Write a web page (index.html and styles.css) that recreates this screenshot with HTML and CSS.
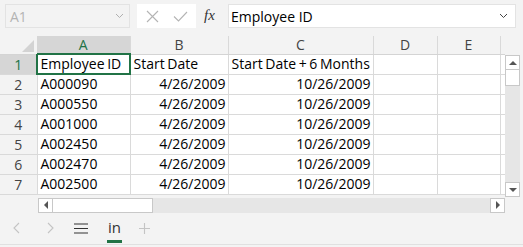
FILE: index.html
```html
<!DOCTYPE html>
<html lang="en">
<head>
    <meta charset="UTF-8">
    <title>Start Date + 6 Months</title>
    <link rel="stylesheet" href="styles.css">
</head>
<body>
    <div class="formula-bar">
        <div class="name-box">
            <span>A1</span>
            <svg class="chev" width="9" height="6" viewBox="0 0 9 6"><path d="M1 1l3.5 3.5L8 1" fill="none" stroke="#b0b0b0" stroke-width="1"/></svg>
        </div>
        <div class="fx-buttons">
            <svg class="btn-icon" width="13" height="13" viewBox="0 0 13 13"><path d="M1 1l11 11M12 1L1 12" stroke="#b4b4b4" stroke-width="1.1" fill="none"/></svg>
            <svg class="btn-icon" width="15" height="11" viewBox="0 0 15 11"><path d="M1 5.5l4.5 4.5L14 1" stroke="#b4b4b4" stroke-width="1.1" fill="none"/></svg>
        </div>
        <div class="fx">fx</div>
        <div class="formula-input">
            <span>Employee ID</span>
            <svg class="chev" width="9" height="6" viewBox="0 0 9 6"><path d="M1 1l3.5 3.5L8 1" fill="none" stroke="#444" stroke-width="1"/></svg>
        </div>
    </div>

    <div class="sheet">
        <div class="grid-wrap">
            <table class="grid">
                <colgroup>
                    <col class="c-rh"><col class="c-a"><col class="c-b"><col class="c-c"><col class="c-d"><col class="c-e"><col class="c-f">
                </colgroup>
                <thead>
                    <tr>
                        <th class="corner"><span class="tri"></span></th>
                        <th class="sel">A</th>
                        <th>B</th>
                        <th>C</th>
                        <th>D</th>
                        <th>E</th>
                        <th class="edge"></th>
                    </tr>
                </thead>
                <tbody>
                    <tr><th class="sel">1</th><td class="active">Employee ID</td><td>Start Date</td><td>Start Date + 6 Months</td><td></td><td></td><td class="edge"></td></tr>
                    <tr><th>2</th><td>A000090</td><td class="num">4/26/2009</td><td class="num">10/26/2009</td><td></td><td></td><td class="edge"></td></tr>
                    <tr><th>3</th><td>A000550</td><td class="num">4/26/2009</td><td class="num">10/26/2009</td><td></td><td></td><td class="edge"></td></tr>
                    <tr><th>4</th><td>A001000</td><td class="num">4/26/2009</td><td class="num">10/26/2009</td><td></td><td></td><td class="edge"></td></tr>
                    <tr><th>5</th><td>A002450</td><td class="num">4/26/2009</td><td class="num">10/26/2009</td><td></td><td></td><td class="edge"></td></tr>
                    <tr><th>6</th><td>A002470</td><td class="num">4/26/2009</td><td class="num">10/26/2009</td><td></td><td></td><td class="edge"></td></tr>
                    <tr><th>7</th><td>A002500</td><td class="num">4/26/2009</td><td class="num">10/26/2009</td><td></td><td></td><td class="edge"></td></tr>
                </tbody>
            </table>
            <div class="hscroll">
                <div class="sb-btn"><span class="arr arr-left"></span></div>
                <div class="h-thumb"></div>
                <div class="h-track"></div>
                <div class="sb-btn"><span class="arr arr-right"></span></div>
            </div>
        </div>
        <div class="vscroll">
            <div class="sb-btn"><span class="arr arr-up"></span></div>
            <div class="v-thumb"></div>
            <div class="v-track"></div>
            <div class="sb-btn"><span class="arr arr-down"></span></div>
        </div>
    </div>

    <div class="tabs">
        <svg class="nav" width="7" height="12" viewBox="0 0 7 12"><path d="M6 1L1 6l5 5" fill="none" stroke="#c4c4c4" stroke-width="1.1"/></svg>
        <svg class="nav" width="7" height="12" viewBox="0 0 7 12"><path d="M1 1l5 5-5 5" fill="none" stroke="#c4c4c4" stroke-width="1.1"/></svg>
        <svg class="menu" width="14" height="11" viewBox="0 0 14 11"><path d="M0 1h14M0 5.5h14M0 10h14" stroke="#333" stroke-width="1.2"/></svg>
        <div class="tab">in</div>
        <svg class="plus" width="11" height="11" viewBox="0 0 11 11"><path d="M5.5 0v11M0 5.5h11" stroke="#c4c4c4" stroke-width="1.1"/></svg>
    </div>
</body>
</html>
```
FILE: styles.css
```css
* {
    margin: 0;
    padding: 0;
    box-sizing: border-box;
}

body {
    width: 523px;
    height: 247px;
    overflow: hidden;
    background-color: #f3f3f3;
    font-family: 'Open Sans', 'Noto Sans', sans-serif;
    color: #000;
}

/* formula bar */
.formula-bar {
    display: flex;
    height: 36px;
    padding: 4px 7px 0 5px;
}

.name-box {
    width: 125px;
    height: 24px;
    border: 1px solid #e3e3e3;
    display: flex;
    align-items: center;
    justify-content: space-between;
    padding: 0 5px 0 4px;
    color: #b3b3b3;
    font-size: 14px;
}

.fx-buttons {
    margin-left: 7px;
    width: 59px;
    height: 24px;
    background-color: #fff;
    display: flex;
    align-items: center;
    gap: 14px;
    padding-left: 9px;
}

.fx {
    width: 27px;
    height: 24px;
    text-align: center;
    font-family: 'Liberation Serif', serif;
    font-style: italic;
    font-size: 15px;
    line-height: 22px;
    color: #333;
}

.formula-input {
    flex: 1;
    margin-left: 5px;
    height: 24px;
    background-color: #fff;
    border: 1px solid #e3e3e3;
    display: flex;
    align-items: center;
    justify-content: space-between;
    padding: 0 7px 0 2px;
    font-size: 14px;
}

/* sheet */
.sheet {
    display: flex;
}

.grid-wrap {
    width: 505px;
}

.grid {
    border-collapse: collapse;
    table-layout: fixed;
    width: 505px;
}

.c-rh { width: 37px; }
.c-a { width: 93px; }
.c-b { width: 98px; }
.c-c { width: 145px; }
.c-d { width: 64px; }
.c-e { width: 63px; }
.c-f { width: 5px; }

.grid th {
    font-weight: normal;
    font-size: 14px;
    color: #444;
    background-color: #f3f3f3;
}

.grid thead th {
    height: 18px;
    line-height: 16px;
    border-right: 1px solid #d9d9d9;
    border-bottom: 1px solid #d4d4d4;
}

.grid thead th.edge {
    border-right: none;
}

.grid thead th.corner {
    position: relative;
    border-right: none;
}

.tri {
    position: absolute;
    right: 3px;
    bottom: 2px;
    width: 0;
    height: 0;
    border-left: 12px solid transparent;
    border-bottom: 12px solid #d3d3d3;
}

.grid tbody th {
    height: 20px;
    border-bottom: 1px solid #d9d9d9;
}

.grid th.sel {
    background-color: #d6d6d6;
    color: #217346;
}

.grid td {
    height: 20px;
    background-color: #fff;
    border: 1px solid #dadada;
    border-top: none;
    padding: 0 2px 0 3px;
    font-size: 14px;
    line-height: 18px;
    word-spacing: -1px;
    white-space: nowrap;
    overflow: visible;
}

.grid td.num {
    text-align: right;
}

.grid td.edge {
    border-right: none;
}

.grid td.active {
    outline: 2px solid #217346;
    outline-offset: -1px;
}

/* scrollbars */
.sb-btn {
    width: 15px;
    height: 15px;
    background-color: #fff;
    border: 1px solid #c8c8c8;
    display: flex;
    align-items: center;
    justify-content: center;
}

.arr {
    width: 0;
    height: 0;
}

.arr-left {
    border-top: 4px solid transparent;
    border-bottom: 4px solid transparent;
    border-right: 4px solid #555;
}

.arr-right {
    border-top: 4px solid transparent;
    border-bottom: 4px solid transparent;
    border-left: 4px solid #555;
}

.arr-up {
    border-left: 4px solid transparent;
    border-right: 4px solid transparent;
    border-bottom: 4px solid #555;
}

.arr-down {
    border-left: 4px solid transparent;
    border-right: 4px solid transparent;
    border-top: 4px solid #555;
}

.hscroll {
    display: flex;
    margin-left: 38px;
    margin-top: 3px;
    height: 15px;
}

.h-thumb {
    width: 100px;
    background-color: #fff;
    border: 1px solid #c8c8c8;
    border-left: none;
}

.h-track {
    flex: 1;
    background-color: #e6e6e6;
}

.vscroll {
    width: 15px;
    margin-top: 19px;
    height: 142px;
    display: flex;
    flex-direction: column;
    background-color: #e6e6e6;
}

.v-thumb {
    height: 16px;
    background-color: #fff;
    border: 1px solid #c8c8c8;
    border-top: none;
}

.v-track {
    flex: 1;
}

/* sheet tabs */
.tabs {
    display: flex;
    align-items: center;
    height: 32px;
    padding-left: 13px;
    border-bottom: 1px solid #e0e0e0;
}

.nav {
    margin-right: 27px;
}

.nav + .menu {
    margin-left: -7px;
}

.tab {
    position: relative;
    margin-left: 19px;
    font-size: 15px;
    color: #333;
    height: 32px;
    line-height: 30px;
    padding: 0 1px;
}

.tab::after {
    content: "";
    position: absolute;
    left: 0;
    right: 0;
    bottom: 1px;
    height: 3px;
    background-color: #217346;
}

.plus {
    margin-left: 17px;
}
```
